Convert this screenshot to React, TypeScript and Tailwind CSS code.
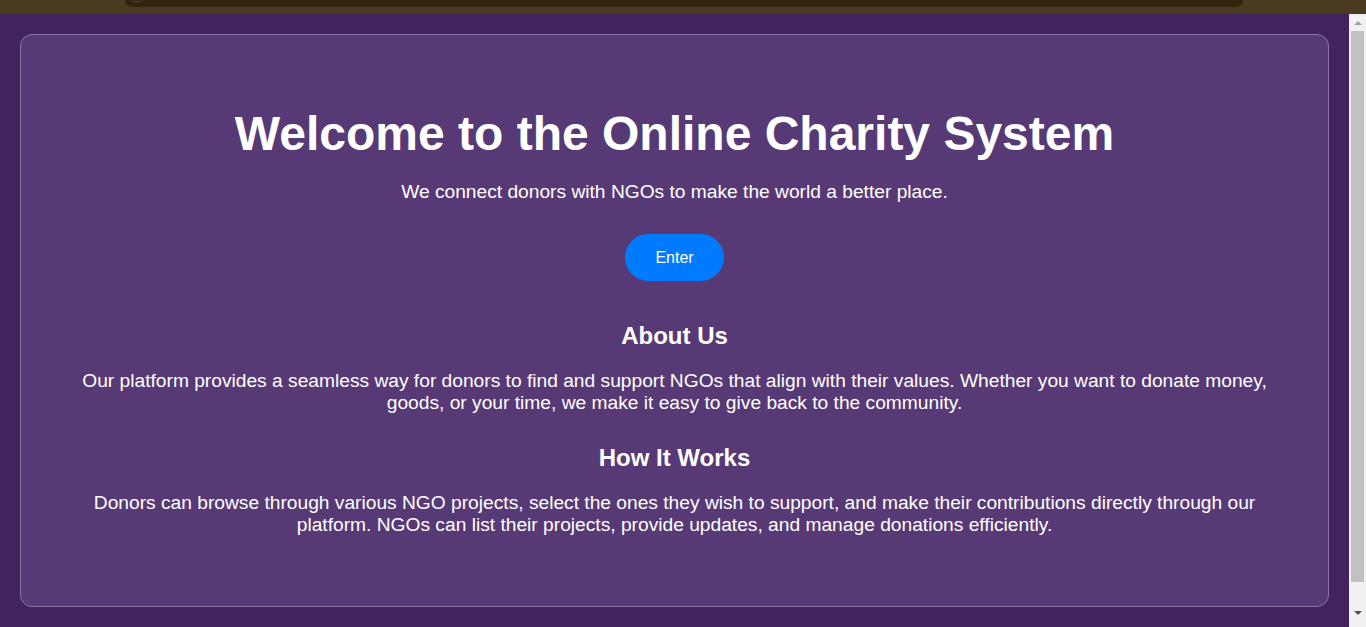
export default function App() {
  return (
    <div className="flex h-[627px] flex-col overflow-hidden bg-[#42235f] font-['Liberation_Sans',Arial,sans-serif] text-white">
      {/* strip of the page above, peeking in */}
      <div className="h-[14px] shrink-0 bg-[#4a3a20] pl-[125px] pr-[123px]">
        <div className="flex h-[7px] items-start rounded-b-[9px] bg-[#33240f] pl-[6px]">
          <div className="h-[2px] w-[12px] rounded-b-full border-x border-b border-[#4a3a20]" />
        </div>
      </div>

      <div className="flex min-h-0 flex-1">
        <main className="flex-1 p-[20px]">
          <div className="h-[573px] rounded-[12px] border border-[#8b76a4] bg-[#573a75] px-[40px] pt-[71px] text-center">
            <h1 className="text-[48px] font-bold leading-[55px]">
              Welcome to the Online Charity System
            </h1>
            <p className="mt-[20px] text-[19.2px] leading-[22px]">
              We connect donors with NGOs to make the world a better place.
            </p>
            <button className="mt-[31px] h-[47px] w-[99px] rounded-full bg-[#007bff] text-[16px] text-white">
              Enter
            </button>

            <h2 className="mt-[41px] text-[24px] font-bold leading-[28px]">About Us</h2>
            <p className="mt-[20px] text-[19.2px] leading-[22px]">
              Our platform provides a seamless way for donors to find and support NGOs that align with
              their values. Whether you want to donate money, goods, or your time, we make it easy to
              give back to the community.
            </p>

            <h2 className="mt-[30px] text-[24px] font-bold leading-[28px]">How It Works</h2>
            <p className="mt-[20px] text-[19.2px] leading-[22px]">
              Donors can browse through various NGO projects, select the ones they wish to support, and
              make their contributions directly through our platform. NGOs can list their projects,
              provide updates, and manage donations efficiently.
            </p>
          </div>
        </main>

        {/* page scrollbar */}
        <div className="flex w-[17px] shrink-0 flex-col bg-[#f1f1f1]">
          <div className="flex h-[17px] items-center justify-center">
            <div className="h-0 w-0 border-x-[4px] border-b-[4px] border-x-transparent border-b-[#a3a3a3]" />
          </div>
          <div className="mx-[2px] h-[551px] bg-[#c1c1c1]" />
          <div className="flex flex-1 items-center justify-center">
            <div className="mt-[16px] h-0 w-0 border-x-[4px] border-t-[4px] border-x-transparent border-t-[#505050]" />
          </div>
        </div>
      </div>
    </div>
  );
}
